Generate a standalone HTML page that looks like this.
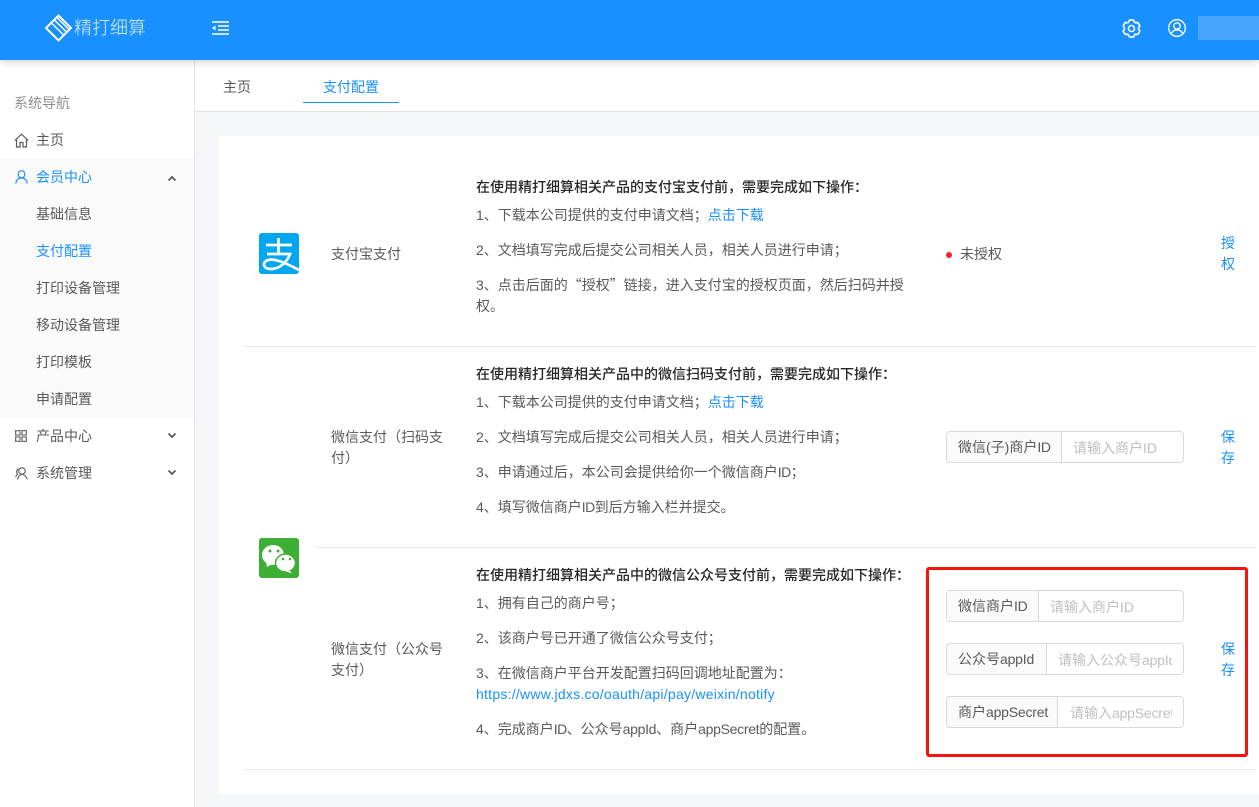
<!DOCTYPE html>
<html lang="zh-CN"><head><meta charset="utf-8"><title>支付配置</title>
<style>
*{box-sizing:border-box;margin:0;padding:0}
html,body{width:1259px;height:807px;overflow:hidden;background:#f5f6fa}
body{position:relative;font:14px/22px "Liberation Sans","Noto Sans CJK SC",sans-serif;color:#595959;text-spacing-trim:space-all}
.t{position:absolute;white-space:nowrap;line-height:22px;height:22px}
.b{color:#1890ff}
.q{font-family:"Noto Sans CJK SC",sans-serif}
.d{letter-spacing:-.6px}
.l{letter-spacing:-.3px}
.m{letter-spacing:-.2px}
.hd{position:absolute;left:0;top:0;width:1259px;height:60px;background:#1890ff;box-shadow:0 2px 8px rgba(0,0,0,.18);z-index:5}
.side{position:absolute;left:0;top:60px;width:195px;height:747px;background:#fff;border-right:1px solid #e8e4e6}
.sub{position:absolute;left:0;top:98px;width:194px;height:259px;background:#fafafa}
.tabs{position:absolute;left:195px;top:60px;width:1064px;height:52px;background:#fff;border-bottom:1px solid #e2e2e2}
.card{position:absolute;left:219px;top:136px;width:1040px;height:658px;background:#fff}
.ln{position:absolute;height:1px;background:#e8e8e8}
.ig{position:absolute;left:946px;width:238px;height:32px;border:1px solid #d9d9d9;border-radius:4px;overflow:hidden;background:#fff}
.ig b{position:absolute;left:0;top:0;height:30px;background:#fafafa;border-right:1px solid #d9d9d9;font-weight:400;line-height:31px;padding-left:11px;white-space:nowrap;color:#595959;overflow:hidden}
.ig i{position:absolute;top:0;height:30px;line-height:33px;font-style:normal;color:#bfbfbf;white-space:nowrap;overflow:hidden}
.act{position:absolute;left:1221px;width:15px;line-height:21px;font-size:14px;color:#1890ff;white-space:normal;text-align:left}
.red{position:absolute;left:926px;top:567px;width:322px;height:190px;border:3px solid #f5140c;border-radius:3px}
svg{position:absolute;overflow:visible}
</style></head><body>
<div class="hd">
<svg style="left:45px;top:14px" width="28" height="28" viewBox="0 0 28 28" fill="none" stroke="#fff" stroke-width="2"><path d="M13.500 1.500 26 14 13.500 26.500 1 14Z"/><path d="M9.500 6 21.500 18M7 9.500 18 20.500M12 3.500 24 15.500" stroke-width="1.500"/></svg>
<span class="t" style="left:74px;top:13px;width:72px;height:30px;font-size:18px;line-height:30px;color:#dcedff;font-weight:300">精打细算</span>
<svg style="left:212px;top:21px" width="17" height="14" viewBox="0 0 17 14" fill="none" stroke="#fff" stroke-width="1.400"><path d="M0 1H17M6 5H17M6 9H17M0 13H17"/><path d="M0 7 3.500 4.500V9.500Z" fill="#fff" stroke="none"/></svg>
<svg style="left:1122px;top:19px" width="19" height="19" viewBox="0 0 24 24" fill="none" stroke="#fff" stroke-width="2" stroke-linejoin="round"><circle cx="12" cy="12" r="3.800"/><path d="M14.500 1.300H9.500L7.750 4.640 3.960 4.500 1.480 8.780 3.500 12 1.480 15.220 3.960 19.500 7.750 19.360 9.500 22.700H14.500L16.250 19.360 20.040 19.500 22.520 15.220 20.500 12 22.520 8.780 20.040 4.500 16.250 4.640Z"/></svg>
<svg style="left:1168px;top:19px" width="18" height="18" viewBox="0 0 18 18" fill="none" stroke="#fff" stroke-width="1.300"><circle cx="9" cy="9" r="8.300"/><circle cx="9" cy="7" r="3.200"/><path d="M3.200 15C4 12.300 6.200 11 9 11S14 12.300 14.800 15"/></svg>
<div style="position:absolute;left:1198px;top:16px;width:61px;height:24px;background:#49a5ff"></div>
</div>

<div class="side"><div class="sub"></div></div>
<span class="t" style="left:14px;top:92px;color:#8c8c8c">系统导航</span>

<svg style="left:14px;top:133px" width="15" height="15" viewBox="0 0 15 15" fill="none" stroke="#595959" stroke-width="1.200"><path d="M.8 7.500 7.500 1.200 14.200 7.500M2.500 6.500V14H6V9.500H9V14H12.500V6.500"/></svg>
<span class="t" style="left:36px;top:129px">主页</span>

<svg style="left:15px;top:170px" width="13" height="14" viewBox="0 0 13 14" fill="none" stroke="#1890ff" stroke-width="1.200"><ellipse cx="6.500" cy="4.300" rx="3.300" ry="3.600"/><path d="M.8 13.500C1.200 10 3.500 8 6.500 8S11.800 10 12.200 13.500"/></svg>
<span class="t b" style="left:36px;top:166px">会员中心</span>
<svg style="left:168px;top:176px" width="8" height="5" viewBox="0 0 8 5" fill="none" stroke="#595959" stroke-width="1.800"><path d="M.5 4.500 4 1 7.500 4.500"/></svg>
<span class="t" style="left:36px;top:203px">基础信息</span>
<span class="t b" style="left:36px;top:240px">支付配置</span>
<span class="t" style="left:36px;top:277px">打印设备管理</span>
<span class="t" style="left:36px;top:314px">移动设备管理</span>
<span class="t" style="left:36px;top:351px">打印模板</span>
<span class="t" style="left:36px;top:388px">申请配置</span>

<svg style="left:15px;top:430px" width="12" height="12" viewBox="0 0 12 12" fill="none" stroke="#737373" stroke-width="1.300"><path d="M.6.600H5V5H.6ZM7 .600H11.400V5H7ZM.6 7H5V11.400H.6ZM7 7H11.400V11.400H7Z"/></svg>
<span class="t" style="left:36px;top:425px">产品中心</span>
<svg style="left:168px;top:433px" width="8" height="5" viewBox="0 0 8 5" fill="none" stroke="#595959" stroke-width="1.800"><path d="M.5.500 4 4 7.500.5"/></svg>
<svg style="left:15px;top:467px" width="13" height="13" viewBox="0 0 13 13" fill="none" stroke="#595959" stroke-width="1.100"><circle cx="7" cy="4" r="3.200"/><path d="M2.500 12.500C3 9.500 5 7.500 7 7.500S11.500 9.500 12.500 12.500M3.500 1.500C1.500 3 1 5.500 2.500 7L.5 10"/></svg>
<span class="t" style="left:36px;top:462px">系统管理</span>
<svg style="left:168px;top:470px" width="8" height="5" viewBox="0 0 8 5" fill="none" stroke="#595959" stroke-width="1.800"><path d="M.5.500 4 4 7.500.5"/></svg>

<div class="tabs"></div>
<span class="t" style="left:223px;top:76px">主页</span>
<span class="t b" style="left:323px;top:76px">支付配置</span>
<div style="position:absolute;left:303px;top:102px;width:96px;height:1px;background:#1890ff"></div>

<div class="card"></div>
<div class="ln" style="left:243px;top:346px;width:1013px"></div>
<div class="ln" style="left:315px;top:547px;width:941px"></div>
<div class="ln" style="left:243px;top:769px;width:1013px"></div>

<svg style="left:259px;top:233px" width="40" height="41" viewBox="0 0 40 41"><rect width="40" height="41" rx="3" fill="#00a7ef"/><path d="M7 12H33M19.500 5V21M8 21H31C28 29 21 36 12 36 5 36 3 31 7 28 13 24 25 29 40 37" fill="none" stroke="#fff" stroke-width="2.700"/></svg>
<span class="t" style="left:331px;top:243px">支付宝支付</span>

<span class="t" style="left:476px;top:176px;color:#262626;font-weight:500">在使用精打细算相关产品的支付宝支付前，需要完成如下操作：</span>
<span class="t" style="left:476px;top:204px">1、下载本公司提供的支付申请文档；<span class="b">点击下载</span></span>
<span class="t" style="left:476px;top:239px">2、文档填写完成后提交公司相关人员，相关人员进行申请；</span>
<span class="t" style="left:476px;top:274px">3、点击后面的<span class="q">“</span>授权<span class="q">”</span>链接，进入支付宝的授权页面，然后扫码并授</span>
<span class="t" style="left:476px;top:295px">权。</span>

<div style="position:absolute;left:946px;top:252px;width:6px;height:6px;border-radius:50%;background:#f5222d"></div>
<span class="t" style="left:960px;top:243px">未授权</span>
<div class="act" style="top:233px">授权</div>

<span class="t" style="left:331px;top:426px">微信支付（扫码支</span>
<span class="t" style="left:331px;top:447px">付）</span>
<span class="t" style="left:476px;top:363px;color:#262626;font-weight:500">在使用精打细算相关产品中的微信扫码支付前，需要完成如下操作：</span>
<span class="t" style="left:476px;top:391px">1、下载本公司提供的支付申请文档；<span class="b">点击下载</span></span>
<span class="t" style="left:476px;top:426px">2、文档填写完成后提交公司相关人员，相关人员进行申请；</span>
<span class="t" style="left:476px;top:461px">3、申请通过后，本公司会提供给你一个微信商户<span class="d">ID</span>；</span>
<span class="t" style="left:476px;top:496px">4、填写微信商户<span class="d">ID</span>到后方输入栏并提交。</span>
<div class="ig" style="top:431px"><b style="width:115px">微信(子)商户<span class="l">ID</span></b><i style="left:126px;width:100px">请输入商户ID</i></div>
<div class="act" style="top:427px">保存</div>

<svg style="left:259px;top:538px" width="40" height="40" viewBox="0 0 40 40"><rect width="40" height="40" rx="3" fill="#3cb034"/><ellipse cx="14" cy="17" rx="11" ry="10" fill="#fff"/><path d="M7 24 8 29 13 26Z" fill="#fff"/><ellipse cx="26.500" cy="25" rx="10" ry="9" fill="#fff" stroke="#3cb034" stroke-width="1.500"/><path d="M30 32 33 35.500 26 33Z" fill="#fff"/><circle cx="11" cy="13" r="1.500" fill="#3cb034"/><circle cx="19" cy="13" r="1.500" fill="#3cb034"/><circle cx="24" cy="21" r="1.300" fill="#3cb034"/><circle cx="31" cy="21" r="1.300" fill="#3cb034"/></svg>

<span class="t" style="left:331px;top:638px">微信支付（公众号</span>
<span class="t" style="left:331px;top:659px">支付）</span>
<span class="t" style="left:476px;top:564px;color:#262626;font-weight:500">在使用精打细算相关产品中的微信公众号支付前，需要完成如下操作：</span>
<span class="t" style="left:476px;top:592px">1、拥有自己的商户号；</span>
<span class="t" style="left:476px;top:627px">2、该商户号已开通了微信公众号支付；</span>
<span class="t" style="left:476px;top:662px">3、在微信商户平台开发配置扫码回调地址配置为：</span>
<span class="t b" style="left:476px;top:683px;letter-spacing:.25px">https://www.jdxs.co/oauth/api/pay/weixin/notify</span>
<span class="t" style="left:476px;top:718px">4、完成商户<span class="d">ID</span>、公众号<span class="l">appId</span>、商户<span class="l">appSecret</span>的配置。</span>

<div class="ig" style="top:590px"><b style="width:92px">微信商户<span class="l">ID</span></b><i style="left:103px;width:125px">请输入商户ID</i></div>
<div class="ig" style="top:643px"><b style="width:100px">公众号<span class="m">appId</span></b><i style="left:111px;width:114px">请输入公众号<span class="m">appId</span></i></div>
<div class="ig" style="top:696px"><b style="width:111px">商户<span class="m">appSecret</span></b><i style="left:123px;width:102px">请输入<span class="m">appSecret</span></i></div>
<div class="act" style="top:639px">保存</div>
<div class="red"></div>
</body></html>
